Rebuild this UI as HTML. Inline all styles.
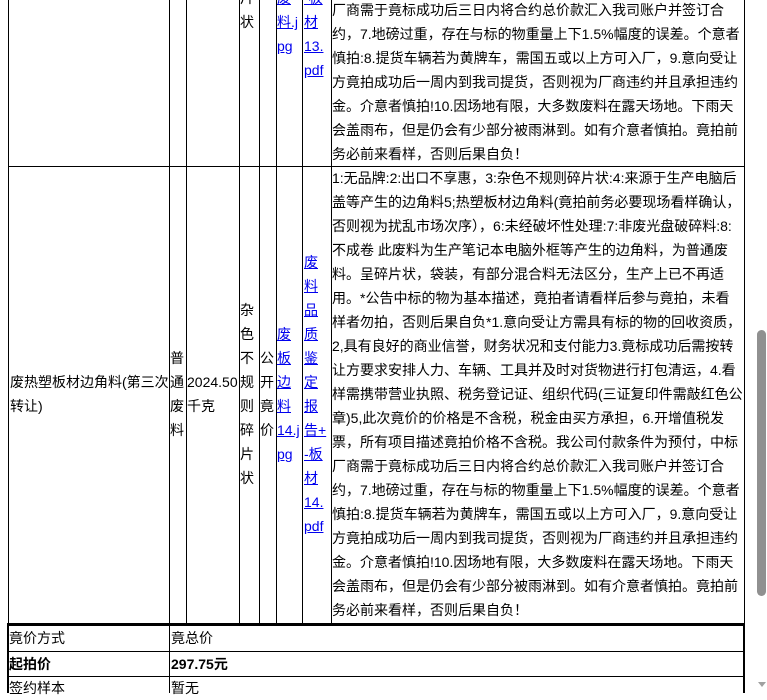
<!DOCTYPE html>
<html><head><meta charset="utf-8"><style>
body{margin:0;width:767px;height:693px;overflow:hidden;background:#fff;position:relative;font-family:"Liberation Sans","Noto Sans CJK SC",sans-serif;font-size:14px;color:#000}
.v{position:absolute;width:1px;background:#000}
.h{position:absolute;height:1px;background:#000}
.t{position:absolute;line-height:24px;white-space:nowrap}
a{color:#00e;text-decoration:underline}
</style></head><body>
<div class="v" style="left:8px;top:0;height:624px"></div>
<div class="v" style="left:169px;top:0;height:624px"></div>
<div class="v" style="left:186px;top:0;height:624px"></div>
<div class="v" style="left:239px;top:0;height:624px"></div>
<div class="v" style="left:259px;top:0;height:624px"></div>
<div class="v" style="left:276px;top:0;height:624px"></div>
<div class="v" style="left:302px;top:0;height:624px"></div>
<div class="v" style="left:331px;top:0;height:624px"></div>
<div class="v" style="left:744px;top:0;height:693px"></div>
<div class="h" style="left:8px;top:166px;width:737px"></div>
<div class="h" style="left:7px;top:623px;width:738px;height:3px"></div>
<div class="v" style="left:7px;top:623px;height:70px;width:2px"></div>
<div class="v" style="left:743px;top:623px;height:70px;width:2px"></div>
<div class="v" style="left:169px;top:625px;height:68px"></div>
<div class="h" style="left:8px;top:651px;width:737px"></div>
<div class="h" style="left:8px;top:676px;width:737px"></div>
<div class="t" style="left:9px;top:626px">竟价方式</div>
<div class="t" style="left:171px;top:626px">竟总价</div>
<div class="t" style="left:9px;top:652px;font-weight:bold">起拍价</div>
<div class="t" style="left:171px;top:652px;font-weight:bold">297.75元</div>
<div class="t" style="left:9px;top:676px">签约样本</div>
<div class="t" style="left:171px;top:676px">暂无</div>

<div class="t" style="left:240px;top:-14px">片<br>状</div>
<div class="t" style="left:277px;top:-14px"><a>废</a><br><a>料.j</a><br><a>pg</a></div>
<div class="t" style="left:304px;top:-14px"><a>-板</a><br><a>材</a><br><a>13.</a><br><a>pdf</a></div>
<div class="t" style="left:332px;top:-2px">厂商需于竟标成功后三日内将合约总价款汇入我司账户并签订合<br>约，7.地磅过重，存在与标的物重量上下1.5%幅度的误差。个意者<br>慎拍:8.提货车辆若为黄牌车，需国五或以上方可入厂，9.意向受让<br>方竟拍成功后一周内到我司提货，否则视为厂商违约并且承担违约<br>金。介意者慎拍!10.因场地有限，大多数废料在露天场地。下雨天<br>会盖雨布，但是仍会有少部分被雨淋到。如有介意者慎拍。竟拍前<br>务必前来看样，否则后果自负！</div>

<div class="t" style="left:10px;top:370px">废热塑板材边角料(第三次<br>转让)</div>
<div class="t" style="left:170px;top:346px">普<br>通<br>废<br>料</div>
<div class="t" style="left:187px;top:370px">2024.50<br>千克</div>
<div class="t" style="left:240px;top:298px">杂<br>色<br>不<br>规<br>则<br>碎<br>片<br>状</div>
<div class="t" style="left:260px;top:346px">公<br>开<br>竟<br>价</div>
<div class="t" style="left:277px;top:322px"><a>废</a><br><a>板</a><br><a>边</a><br><a>料</a><br><a>14.j</a><br><a>pg</a></div>
<div class="t" style="left:304px;top:250px"><a>废</a><br><a>料</a><br><a>品</a><br><a>质</a><br><a>鉴</a><br><a>定</a><br><a>报</a><br><a>告+</a><br><a>-板</a><br><a>材</a><br><a>14.</a><br><a>pdf</a></div>
<div class="t" style="left:332px;top:166px">1:无品牌:2:出口不享惠，3:杂色不规则碎片状:4:来源于生产电脑后<br>盖等产生的边角料5;热塑板材边角料(竟拍前务必要现场看样确认，<br>否则视为扰乱市场次序），6:未经破坏性处理:7:非废光盘破碎料:8:<br>不成卷 此废料为生产笔记本电脑外框等产生的边角料，为普通废<br>料。呈碎片状，袋装，有部分混合料无法区分，生产上已不再适<br>用。*公告中标的物为基本描述，竟拍者请看样后参与竟拍，未看<br>样者勿拍，否则后果自负*1.意向受让方需具有标的物的回收资质，<br>2,具有良好的商业信誉，财务状况和支付能力3.竟标成功后需按转<br>让方要求安排人力、车辆、工具并及时对货物进行打包清运，4.看<br>样需携带营业执照、税务登记证、组织代码(三证复印件需敲红色公<br>章)5,此次竟价的价格是不含税，税金由买方承担，6.开增值税发<br>票，所有项目描述竟拍价格不含税。我公司付款条件为预付，中标<br>厂商需于竟标成功后三日内将合约总价款汇入我司账户并签订合<br>约，7.地磅过重，存在与标的物重量上下1.5%幅度的误差。个意者<br>慎拍:8.提货车辆若为黄牌车，需国五或以上方可入厂，9.意向受让<br>方竟拍成功后一周内到我司提货，否则视为厂商违约并且承担违约<br>金。介意者慎拍!10.因场地有限，大多数废料在露天场地。下雨天<br>会盖雨布，但是仍会有少部分被雨淋到。如有介意者慎拍。竟拍前<br>务必前来看样，否则后果自负！</div>

<div style="position:absolute;left:757px;top:330px;width:9px;height:266px;background:#909090;border-radius:5px"></div>
<div style="position:absolute;left:758px;top:682px;width:0;height:0;border-left:4px solid transparent;border-right:4px solid transparent;border-top:5px solid #a0a0a0"></div>
</body></html>
